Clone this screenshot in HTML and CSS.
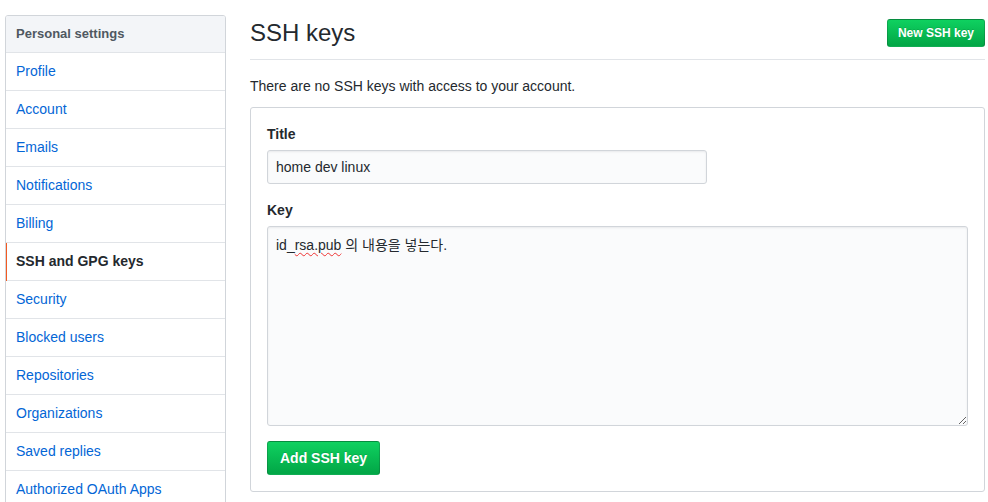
FILE: index.html
```html
<!DOCTYPE html>
<html lang="en">
<head>
<meta charset="utf-8">
<title>SSH and GPG keys</title>
<link rel="stylesheet" href="styles.css">
</head>
<body>
<div class="layout">
  <nav class="menu">
    <h3 class="menu-heading">Personal settings</h3>
    <a class="menu-item" href="#">Profile</a>
    <a class="menu-item" href="#">Account</a>
    <a class="menu-item" href="#">Emails</a>
    <a class="menu-item" href="#">Notifications</a>
    <a class="menu-item" href="#">Billing</a>
    <a class="menu-item selected" href="#">SSH and GPG keys</a>
    <a class="menu-item" href="#">Security</a>
    <a class="menu-item" href="#">Blocked users</a>
    <a class="menu-item" href="#">Repositories</a>
    <a class="menu-item" href="#">Organizations</a>
    <a class="menu-item" href="#">Saved replies</a>
    <a class="menu-item" href="#">Authorized OAuth Apps</a>
  </nav>
  <main class="content">
    <div class="subhead">
      <h2 class="subhead-heading">SSH keys</h2>
      <a class="btn btn-primary btn-sm" href="#">New SSH key</a>
    </div>
    <p class="blankslate">There are no SSH keys with access to your account.</p>
    <form class="boxed">
      <div class="form-group first">
        <label class="label" for="title">Title</label>
        <input id="title" class="form-control short" type="text" value="home dev linux">
      </div>
      <div class="form-group last">
        <label class="label">Key</label>
        <div class="form-control textarea" contenteditable="true" role="textbox">id_<span class="misspelled">rsa.pub</span> 의 내용을 넣는다.</div>
      </div>
      <button class="btn btn-primary" type="button">Add SSH key</button>
    </form>
  </main>
</div>
</body>
</html>
```

FILE: styles.css
```css
* { box-sizing: border-box; }

body {
  margin: 0;
  padding: 15px 3px 0 5px;
  font-family: "Liberation Sans", Arial, "Noto Sans CJK KR", sans-serif;
  font-size: 14px;
  line-height: 20px;
  color: #24292e;
  background: #fff;
  overflow: hidden;
}

.layout {
  display: flex;
  gap: 24px;
  align-items: flex-start;
}

.menu {
  width: 221px;
  flex: none;
  display: flex;
  flex-direction: column;
  border: 1px solid #d1d5da;
  border-radius: 3px;
  overflow: hidden;
}

.menu-heading {
  margin: 0;
  padding: 8px 10px;
  font-size: 13px;
  font-weight: bold;
  line-height: 20px;
  color: #4f5861;
  background: #f3f5f8;
  border-bottom: 1px solid #e1e4e8;
}

.menu-item {
  display: block;
  padding: 8px 10px 9px;
  color: #0366d6;
  text-decoration: none;
  border-bottom: 1px solid #e1e4e8;
  line-height: 20px;
  position: relative;
}

.menu-item.selected {
  font-weight: bold;
  color: #24292e;
  cursor: default;
}

.menu-item.selected::before {
  content: "";
  position: absolute;
  left: -1px;
  top: 0;
  bottom: -1px;
  width: 2px;
  background: #f25a22;
}

.content {
  width: 735px;
  flex: none;
}

.subhead {
  display: flex;
  align-items: center;
  padding-bottom: 8px;
  margin-bottom: 16px;
  border-bottom: 1px solid #e1e4e8;
}

.subhead-heading {
  flex: 1;
  margin: 0;
  font-size: 24px;
  font-weight: normal;
  line-height: 36px;
}

.btn {
  display: inline-block;
  padding: 6px 12px;
  font-family: inherit;
  font-size: 14px;
  font-weight: bold;
  line-height: 20px;
  white-space: nowrap;
  text-decoration: none;
  border: 1px solid rgba(27, 31, 35, 0.2);
  border-radius: 3px;
  cursor: pointer;
}

.btn-primary {
  color: #fff;
  background-color: #05ad4b;
  background-image: linear-gradient(-180deg, #0fd160 0%, #02a847 95%);
  text-shadow: 0 -1px 0 rgba(0, 0, 0, 0.12);
}

.btn-sm {
  padding: 3px 10px;
  font-size: 12px;
  line-height: 20px;
}

.blankslate {
  margin: 0 0 11px;
}

.boxed {
  border: 1px solid #d1d5da;
  border-radius: 3px;
  padding: 16px;
}

.form-group {
  margin: 0 0 16px;
  display: flex;
  flex-direction: column;
  align-items: flex-start;
}

.form-group.last {
  margin-bottom: 15px;
}

.label {
  font-weight: bold;
  margin-bottom: 6px;
}

.form-control {
  padding: 6px 8px;
  font-family: inherit;
  font-size: 14px;
  line-height: 20px;
  color: #24292e;
  background-color: #fafbfc;
  border: 1px solid #d1d5da;
  border-radius: 3px;
  box-shadow: inset 0 1px 2px rgba(27, 31, 35, 0.075);
  outline: none;
}

.short {
  width: 440px;
  height: 34px;
}

.textarea {
  width: 100%;
  height: 200px;
  padding: 8px;
  overflow: auto;
  resize: both;
  font-family: "Liberation Sans", Arial, "Noto Sans CJK KR", sans-serif;
}

.misspelled {
  text-decoration: underline wavy #e33;
  text-decoration-thickness: 1px;
  text-underline-offset: 2px;
}
```
